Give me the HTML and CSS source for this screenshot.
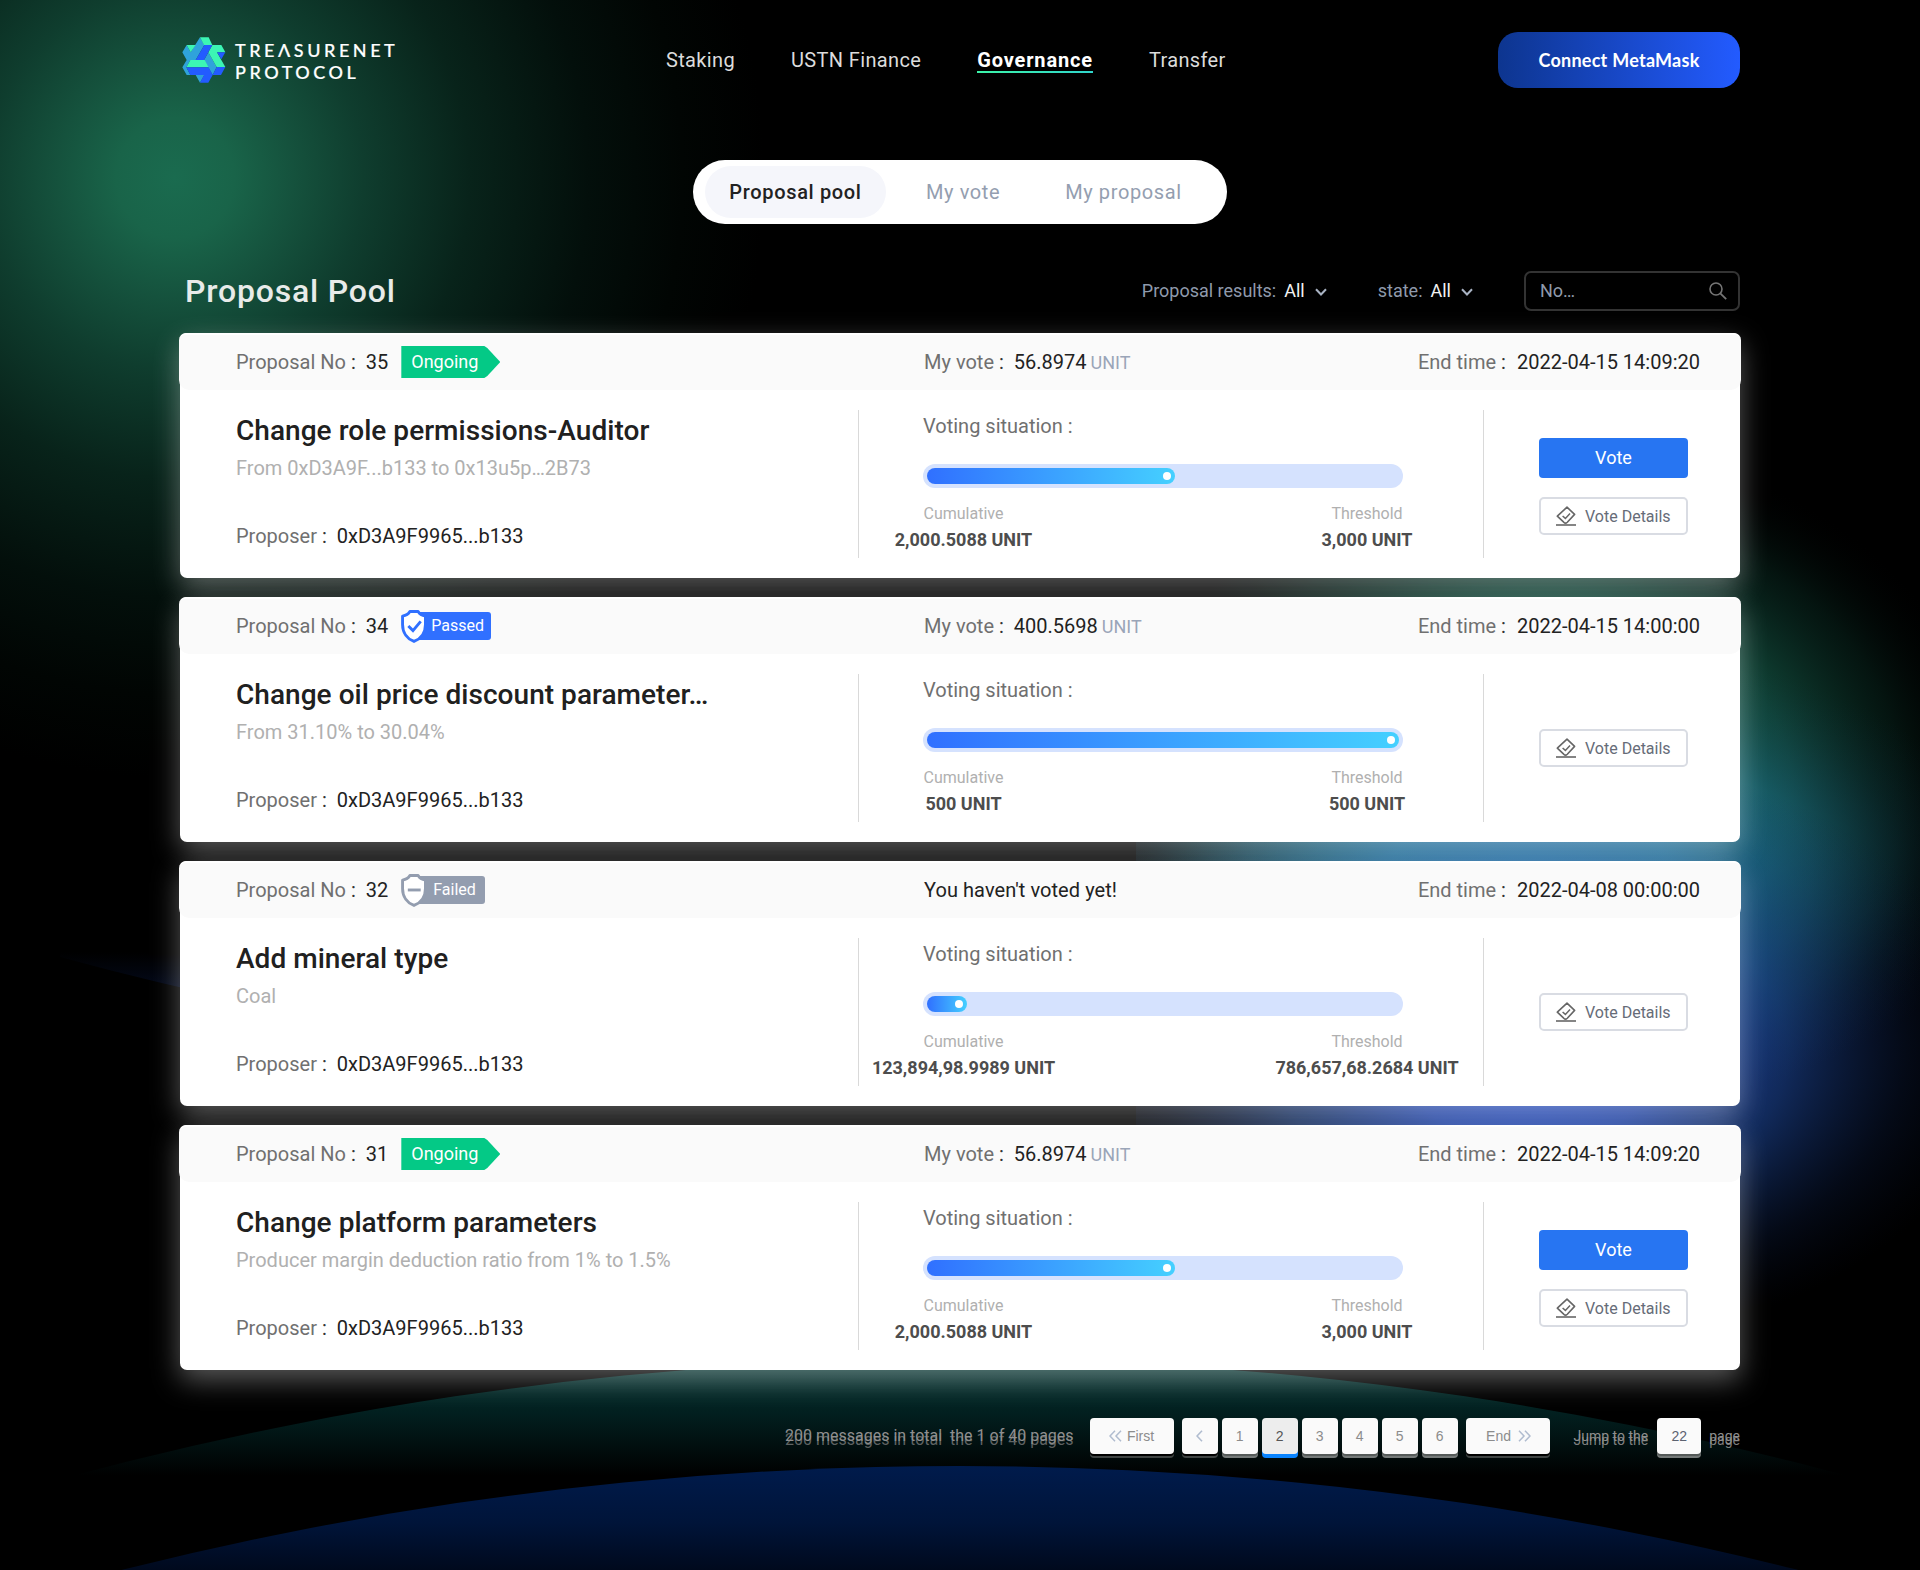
FILE: index.html
```html
<!DOCTYPE html>
<html lang="en">
<head>
<meta charset="utf-8">
<title>Treasurenet Protocol - Governance</title>
<link rel="stylesheet" href="styles.css">
</head>
<body>
<svg class="backdrop" viewBox="0 0 1920 1570" aria-hidden="true">
  <defs>
    <radialGradient id="glow-green" gradientUnits="userSpaceOnUse" cx="0" cy="0" r="1" gradientTransform="translate(175 178) scale(590 600)">
      <stop offset="0" stop-color="#1a6b4f"/>
      <stop offset=".1" stop-color="#196449"/>
      <stop offset=".2" stop-color="#15523d"/>
      <stop offset=".32" stop-color="#0f3d2e"/>
      <stop offset=".5" stop-color="#08231a"/>
      <stop offset=".7" stop-color="#030f0b"/>
      <stop offset=".86" stop-color="#010503"/>
      <stop offset="1" stop-color="#000"/>
    </radialGradient>
    <radialGradient id="glow-teal" gradientUnits="userSpaceOnUse" cx="0" cy="0" r="1" gradientTransform="translate(1550 790) scale(440 350)">
      <stop offset="0" stop-color="#1f8a68"/>
      <stop offset=".3" stop-color="#1a7459"/>
      <stop offset=".55" stop-color="#124c3d" stop-opacity=".9"/>
      <stop offset=".8" stop-color="#08251d" stop-opacity=".55"/>
      <stop offset="1" stop-color="#020605" stop-opacity="0"/>
    </radialGradient>
    <radialGradient id="glow-cyan" gradientUnits="userSpaceOnUse" cx="0" cy="0" r="1" gradientTransform="translate(1530 875) scale(470 240)">
      <stop offset="0" stop-color="#2492ba"/>
      <stop offset=".3" stop-color="#2088ae" stop-opacity=".92"/>
      <stop offset=".6" stop-color="#1a6484" stop-opacity=".55"/>
      <stop offset=".82" stop-color="#124058" stop-opacity=".2"/>
      <stop offset="1" stop-color="#0a2030" stop-opacity="0"/>
    </radialGradient>
    <radialGradient id="glow-blue" gradientUnits="userSpaceOnUse" cx="0" cy="0" r="1" gradientTransform="translate(1530 1050) scale(470 300)">
      <stop offset="0" stop-color="#2850cc"/>
      <stop offset=".3" stop-color="#2349b4" stop-opacity=".9"/>
      <stop offset=".55" stop-color="#1c4596" stop-opacity=".6"/>
      <stop offset=".8" stop-color="#122c66" stop-opacity=".22"/>
      <stop offset="1" stop-color="#0a1538" stop-opacity="0"/>
    </radialGradient>
    <linearGradient id="arc-teal" gradientUnits="userSpaceOnUse" x1="0" y1="1350" x2="0" y2="1476">
      <stop offset="0" stop-color="#053a36"/>
      <stop offset=".5" stop-color="#021f1f"/>
      <stop offset="1" stop-color="#000"/>
    </linearGradient>
    <linearGradient id="arc-blue" gradientUnits="userSpaceOnUse" x1="0" y1="1466" x2="0" y2="1580">
      <stop offset="0" stop-color="#001b4c"/>
      <stop offset=".5" stop-color="#001439"/>
      <stop offset="1" stop-color="#000717"/>
    </linearGradient>
    <linearGradient id="arc-low" gradientUnits="userSpaceOnUse" x1="0" y1="952" x2="0" y2="1078">
      <stop offset="0" stop-color="#0a1c50" stop-opacity="0"/>
      <stop offset="1" stop-color="#10308c"/>
    </linearGradient>
  </defs>
  <rect width="800" height="800" fill="url(#glow-green)"/>
  <path d="M60 950H1136V1073A3430 3430 0 0 1 60 957Z" fill="url(#arc-low)"/>
  <rect x="1136" y="480" width="784" height="880" fill="url(#glow-teal)"/>
  <rect x="1136" y="480" width="784" height="880" fill="url(#glow-cyan)"/>
  <rect x="1136" y="480" width="784" height="880" fill="url(#glow-blue)"/>
  <circle cx="960" cy="4789" r="3430" fill="url(#arc-teal)"/>
  <circle cx="960" cy="4896" r="3430" fill="url(#arc-blue)"/>
</svg>

<svg class="sprite" aria-hidden="true">
  <symbol id="i-ballot" viewBox="0 0 20 20">
    <path d="M11 1.2 18.6 8.4 11.300 16.200Q9.500 18 7.700 16.200L1.300 10.200Z" fill="none" stroke="#666" stroke-width="1.6" stroke-linejoin="round"/>
    <path d="M6.600 10 9.400 12.400 14 7.600" fill="none" stroke="#666" stroke-width="1.500"/>
    <path d="M0 19H20" stroke="#666" stroke-width="1.600"/>
  </symbol>
  <symbol id="i-shield" viewBox="0 0 25 32">
    <path d="M8.500 1.500H16.500Q18.500 5 23.600 6V14C23.600 22 19 28 12.500 30.500 6 28 1.400 22 1.400 14V6Q6.500 5 8.500 1.500Z" fill="#fff" stroke="currentColor" stroke-width="2.800" stroke-linejoin="round"/>
  </symbol>
  <symbol id="i-chevron" viewBox="0 0 12 8"><path d="M1 1.200 6 6.500 11 1.200" fill="none" stroke="#a9b3c3" stroke-width="2"/></symbol>
</svg>

<div class="page">
  <header class="topbar">
    <a class="brand">
      <svg class="brand-mark" viewBox="67 51 130 138">
        <path fill="#2fa3db" d="M67 97 80 75 92 97 120 52 133 75 107 120H80ZM67 142 80 120H91L79 142 91 165H80ZM145 97 170 141 158 165 132 120ZM107 165H133L120 188Z"/>
        <path fill="#3cf5b4" d="M80 75H107L92 97ZM120 52H146L157 75H132ZM157 75H184L196 97H171L184 120 196 141H170L145 97ZM91 120H134L146 142H79Z"/>
        <path fill="#235bff" d="M133 75H157L132 120H107ZM171 97H196L184 118ZM79 142H146L158 165 145 188H120L132 165H91ZM170 141H196L183 165H158Z"/>
      </svg>
      <span class="brand-name"><span>TREΛSURENET</span><span>PROTOCOL</span></span>
    </a>
    <nav class="nav">
      <a>Staking</a><a>USTN Finance</a><a class="active">Governance</a><a>Transfer</a>
    </nav>
    <button class="connect">Connect MetaMask</button>
  </header>

  <div class="tabs">
    <button class="tab active">Proposal pool</button><button class="tab">My vote</button><button class="tab">My proposal</button>
  </div>

  <div class="toolbar">
    <h1>Proposal Pool</h1>
    <div class="filter filter-results"><span>Proposal results:</span><b>All</b><svg><use href="#i-chevron"/></svg></div>
    <div class="filter filter-state"><span>state:</span><b>All</b><svg><use href="#i-chevron"/></svg></div>
    <label class="search"><span>No…</span>
      <svg viewBox="0 0 18 18"><circle cx="7" cy="7" r="6" fill="none" stroke="#757575" stroke-width="1.600"/><path d="M11.300 11.300 17.200 17.200" stroke="#757575" stroke-width="1.800"/></svg>
    </label>
  </div>

  <main class="list">
    <article class="card">
      <div class="card-head">
        <div class="cell-no"><span class="key">Proposal No</span><i>:</i><span class="val">35</span><span class="flag">Ongoing</span></div>
        <div class="cell-vote"><span class="key">My vote</span><i>:</i><span class="val">56.8974</span><small>UNIT</small></div>
        <div class="cell-end"><span class="key">End time</span><i>:</i><span class="val">2022-04-15 14:09:20</span></div>
      </div>
      <div class="card-body">
        <section class="info"><h2>Change role permissions-Auditor</h2><p>From 0xD3A9F...b133 to 0x13u5p…2B73</p>
          <div class="proposer"><span class="key">Proposer</span><i>:</i><span class="val">0xD3A9F9965...b133</span></div></section>
        <section class="voting"><h3>Voting situation :</h3>
          <div class="bar"><div class="fill" style="width:248px"></div></div>
          <div class="stats"><div class="stat cumulative"><span>Cumulative</span><b>2,000.5088 UNIT</b></div><div class="stat threshold"><span>Threshold</span><b>3,000 UNIT</b></div></div></section>
        <section class="actions double"><button class="vote">Vote</button><button class="details"><svg><use href="#i-ballot"/></svg>Vote Details</button></section>
      </div>
    </article>

    <article class="card">
      <div class="card-head">
        <div class="cell-no"><span class="key">Proposal No</span><i>:</i><span class="val">34</span>
          <span class="badge passed"><svg viewBox="0 0 25 32"><use href="#i-shield"/><path d="M7 15.500 11.500 20 19 11" fill="none" stroke="currentColor" stroke-width="2.800"/></svg><em>Passed</em></span></div>
        <div class="cell-vote"><span class="key">My vote</span><i>:</i><span class="val">400.5698</span><small>UNIT</small></div>
        <div class="cell-end"><span class="key">End time</span><i>:</i><span class="val">2022-04-15 14:00:00</span></div>
      </div>
      <div class="card-body">
        <section class="info"><h2>Change oil price discount parameter…</h2><p>From 31.10% to 30.04%</p>
          <div class="proposer"><span class="key">Proposer</span><i>:</i><span class="val">0xD3A9F9965...b133</span></div></section>
        <section class="voting"><h3>Voting situation :</h3>
          <div class="bar"><div class="fill" style="width:472px"></div></div>
          <div class="stats"><div class="stat cumulative"><span>Cumulative</span><b>500 UNIT</b></div><div class="stat threshold"><span>Threshold</span><b>500 UNIT</b></div></div></section>
        <section class="actions"><button class="details"><svg><use href="#i-ballot"/></svg>Vote Details</button></section>
      </div>
    </article>

    <article class="card">
      <div class="card-head">
        <div class="cell-no"><span class="key">Proposal No</span><i>:</i><span class="val">32</span>
          <span class="badge failed"><svg viewBox="0 0 25 32"><use href="#i-shield"/><path d="M6.500 15.500H19" fill="none" stroke="currentColor" stroke-width="2.800"/></svg><em>Failed</em></span></div>
        <div class="cell-vote"><span class="val notice">You haven't voted yet!</span></div>
        <div class="cell-end"><span class="key">End time</span><i>:</i><span class="val">2022-04-08 00:00:00</span></div>
      </div>
      <div class="card-body">
        <section class="info"><h2>Add mineral type</h2><p>Coal</p>
          <div class="proposer"><span class="key">Proposer</span><i>:</i><span class="val">0xD3A9F9965...b133</span></div></section>
        <section class="voting"><h3>Voting situation :</h3>
          <div class="bar"><div class="fill" style="width:40px"></div></div>
          <div class="stats"><div class="stat cumulative"><span>Cumulative</span><b>123,894,98.9989 UNIT</b></div><div class="stat threshold"><span>Threshold</span><b>786,657,68.2684 UNIT</b></div></div></section>
        <section class="actions"><button class="details"><svg><use href="#i-ballot"/></svg>Vote Details</button></section>
      </div>
    </article>

    <article class="card">
      <div class="card-head">
        <div class="cell-no"><span class="key">Proposal No</span><i>:</i><span class="val">31</span><span class="flag">Ongoing</span></div>
        <div class="cell-vote"><span class="key">My vote</span><i>:</i><span class="val">56.8974</span><small>UNIT</small></div>
        <div class="cell-end"><span class="key">End time</span><i>:</i><span class="val">2022-04-15 14:09:20</span></div>
      </div>
      <div class="card-body">
        <section class="info"><h2>Change platform parameters</h2><p>Producer margin deduction ratio from 1% to 1.5%</p>
          <div class="proposer"><span class="key">Proposer</span><i>:</i><span class="val">0xD3A9F9965...b133</span></div></section>
        <section class="voting"><h3>Voting situation :</h3>
          <div class="bar"><div class="fill" style="width:248px"></div></div>
          <div class="stats"><div class="stat cumulative"><span>Cumulative</span><b>2,000.5088 UNIT</b></div><div class="stat threshold"><span>Threshold</span><b>3,000 UNIT</b></div></div></section>
        <section class="actions double"><button class="vote">Vote</button><button class="details"><svg><use href="#i-ballot"/></svg>Vote Details</button></section>
      </div>
    </article>
  </main>

  <footer class="pager">
    <span class="summary">200 messages in total&nbsp; the 1 of 40 pages</span>
    <button class="pg wide edge"><svg class="dbl" viewBox="0 0 13 12"><path d="M6 .8 1 6 6 11.200M12 .8 7 6 12 11.200" fill="none" stroke="#b0bccf" stroke-width="1.500"/></svg>First</button>
    <div class="numbers">
      <button class="pg edge"><svg class="sgl" viewBox="0 0 7 12"><path d="M6 .8 1 6 6 11.200" fill="none" stroke="#b0bccf" stroke-width="1.600"/></svg></button>
      <button class="pg">1</button><button class="pg current">2</button><button class="pg">3</button><button class="pg">4</button><button class="pg">5</button><button class="pg">6</button>
    </div>
    <button class="pg wide edge last">End<svg class="dbl" viewBox="0 0 13 12"><path d="M1 .8 6 6 1 11.200M7 .8 12 6 7 11.200" fill="none" stroke="#b0bccf" stroke-width="1.500"/></svg></button>
    <span class="jump">Jump to the</span>
    <span class="pg target">22</span>
    <span class="jump unit">page</span>
  </footer>
</div>
</body>
</html>
```

FILE: styles.css
```css
* { box-sizing: border-box; margin: 0; padding: 0; }
body { background: #000; font-family: Roboto, "Liberation Sans", sans-serif; height: 1570px; overflow: hidden; position: relative; }
button { border: 0; font-family: inherit; }
i, em { font-style: normal; }
.backdrop { position: absolute; inset: 0; width: 1920px; height: 1570px; z-index: -1; }
.sprite { position: absolute; width: 0; height: 0; }
.page { width: 1560px; margin: 0 auto; }

.topbar { height: 120px; display: grid; grid-template-columns: 486px 1fr 242px; align-items: center; }
.brand { display: flex; align-items: center; gap: 9px; padding-left: 2px; }
.brand-mark { width: 44px; height: 46px; }
.brand-name { display: flex; flex-direction: column; font: 500 18px/22px Lato, sans-serif; letter-spacing: 3.55px; color: #fff; padding-top: 2px; -webkit-text-stroke: .2px #fff; }
.nav { display: flex; gap: 56px; font-size: 20px; letter-spacing: .35px; color: #dcdcdc; }
.nav a { line-height: 24px; height: 25px; }
.nav .active { color: #fff; font-weight: 700; letter-spacing: .85px; border-bottom: 2px solid; border-image: linear-gradient(90deg, #3cf5a8, #30d5cc) 1; }
.connect { height: 56px; border-radius: 20px; background: linear-gradient(90deg, #0d358f, #235bff); color: #fff; font: 700 18px/22px Lato, sans-serif; letter-spacing: .25px; }

.tabs { width: 534px; height: 64px; margin: 40px auto 0; background: #fff; border-radius: 32px; padding: 6px 11px 6px 12px; display: flex; align-items: center; }
.tab { height: 52px; background: none; border-radius: 26px; font-size: 20px; letter-spacing: .6px; color: #949eb0; padding: 0; margin-left: 40px; }
.tab + .tab + .tab { margin-left: 65px; }
.tab.active { width: 181px; margin-left: 0; background: #f5f6fb; color: #222; font-weight: 500; letter-spacing: .66px; }

.toolbar { display: flex; align-items: center; height: 40px; margin-top: 47px; }
.toolbar h1 { margin-right: auto; padding-left: 5px; font-size: 32px; font-weight: 500; letter-spacing: .82px; color: #e8ebe9; }
.filter { display: flex; align-items: center; font-size: 18px; color: #8f9aac; padding-bottom: 1px; }
.filter b { font-weight: 400; color: #f2f2f2; margin-left: 8px; }
.filter svg { width: 12px; height: 8px; margin-left: 10px; margin-top: 2px; }
.filter-state { margin: 0 51px; }
.search { width: 216px; height: 40px; border: 2px solid #333; border-radius: 7px; display: flex; align-items: center; justify-content: space-between; padding: 0 11px 0 14px; font-size: 18px; color: #8f9aac; }
.search span { padding-bottom: 1px; }
.search svg { width: 18px; height: 18px; }

.list { display: flex; flex-direction: column; gap: 19px; margin-top: 22px; }
.card { height: 245px; background: #fff; border-radius: 7px; box-shadow: 0 10px 28px rgba(255, 255, 255, .35); }
.card-head { height: 57px; margin: 0 -1px; padding-bottom: 1px; border-top: 2px solid #fff; border-radius: 7px 7px 10px 10px; background: #fafafa; display: grid; grid-template-columns: 745px 1fr 500px; align-items: center; font-size: 20px; }
.card-head > div { display: flex; align-items: center; }
.card-head .cell-no { padding-left: 57px; }
.card-head .cell-end { justify-content: flex-end; padding-right: 41px; }
.card-head .cell-end i { margin-right: 11px; }
.key { color: #707070; }
.key + i { color: #333; margin: 0 10px 0 5px; }
.val { color: #222; }
.notice { letter-spacing: .06px; }
.card-head small { font-size: 18px; color: #9aa5b8; margin-left: 4px; padding-top: 1px; }
.flag { width: 99px; height: 32px; margin-left: 13px; padding-left: 10px; background: #04c986; color: #fff; font-size: 18px; line-height: 32px; clip-path: polygon(0 0, 83px 0, 86px 2px, 99px 16px, 86px 30px, 83px 100%, 0 100%); }
.badge { display: flex; align-items: center; margin-left: 13px; }
.badge svg { width: 26px; height: 33px; z-index: 1; }
.badge em { height: 28px; margin-left: -10px; border-radius: 3px; font-size: 16px; line-height: 28px; color: #fff; }
.passed { color: #3070ff; }
.passed em { background: #3070ff; padding: 0 7px 0 14px; }
.failed { color: #939daf; }
.failed em { background: #939daf; padding: 0 9px 0 16px; }

.card-body { height: 188px; padding: 20px 0; display: grid; grid-template-columns: 678px 626px 256px; }
.info { padding: 3px 0 0 56px; }
.info h2 { font-size: 28px; line-height: 36px; font-weight: 500; letter-spacing: .04px; color: #202020; }
.info p { font-size: 20px; line-height: 24px; margin-top: 7px; color: #b0b0b0; }
.proposer { display: flex; font-size: 20px; line-height: 24px; margin-top: 44px; }
.voting { border: solid #d9d9d9; border-width: 0 1px; padding: 4px 0 0 64px; }
.voting h3 { font-size: 20px; line-height: 24px; font-weight: 400; color: #707070; }
.bar { width: 480px; height: 24px; margin-top: 26px; padding: 4px; border-radius: 12px; background: #d5e2fe; }
.fill { height: 16px; border-radius: 8px; padding: 4px; background: linear-gradient(90deg, #3070ff, #45d0ff); display: flex; justify-content: flex-end; }
.fill::after { content: ""; width: 8px; height: 8px; border-radius: 50%; background: #fff; }
.stats { width: 480px; display: flex; justify-content: space-between; margin-top: 15px; }
.stat { display: flex; flex-direction: column; align-items: center; white-space: nowrap; }
.stat.cumulative { width: 81px; }
.stat.threshold { width: 72px; }
.stat span { font-size: 16px; line-height: 21px; color: #b0b0b0; }
.stat b { font-size: 18px; line-height: 22px; margin-top: 5px; font-weight: 700; color: #4d4d4d; }
.actions { display: flex; flex-direction: column; justify-content: center; gap: 19px; padding-left: 55px; }
.actions.double { padding-top: 5px; }
.vote { width: 149px; height: 40px; padding-bottom: 1px; border-radius: 4px; background: #2775f2; color: #fff; font-size: 18px; }
.details { width: 149px; height: 38px; border: 2px solid #d9dce3; border-radius: 5px; background: #fff; display: flex; align-items: center; padding-left: 15px; gap: 9px; font-size: 16px; color: #666c78; white-space: nowrap; }
.details svg { width: 20px; height: 20px; }

.pager { display: flex; justify-content: flex-end; height: 36px; margin-top: 48px; font-family: "Liberation Sans", sans-serif; }
.summary, .jump { font-family: Roboto, sans-serif; color: #8f8f8f; text-shadow: 0 4px 0 rgba(128, 128, 128, .75); white-space: nowrap; }
.summary { font-size: 16px; line-height: 35px; margin-right: 16px; }
.jump { font-size: 14px; line-height: 36px; margin-left: 24px; text-shadow: 0 4px 0 rgba(135, 135, 135, .95); }
.jump.unit { margin-left: 8px; }
.numbers { display: flex; gap: 4px; margin: 0 8px; }
.pg { width: 36px; height: 36px; border-radius: 4px; background: #fafafa; color: #8c8c8c; font-size: 14px; line-height: 36px; display: flex; align-items: center; justify-content: center; gap: 5px; box-shadow: 0 2px 0 #555a59, 0 4px 0 #757a79; }
.pg.wide { width: 84px; }
.pg.last { gap: 7px; padding-left: 2px; }
.pg.edge { box-shadow: 0 2px 0 #000, 0 4px 0 #3e4342; }
.pg.current { background: #ededed; color: #555; box-shadow: 0 4px 0 #0a84ff; }
.pg.target { width: 44px; margin-left: 9px; color: #5c6270; }
.dbl { width: 13px; height: 12px; }
.sgl { width: 7px; height: 12px; }
```
